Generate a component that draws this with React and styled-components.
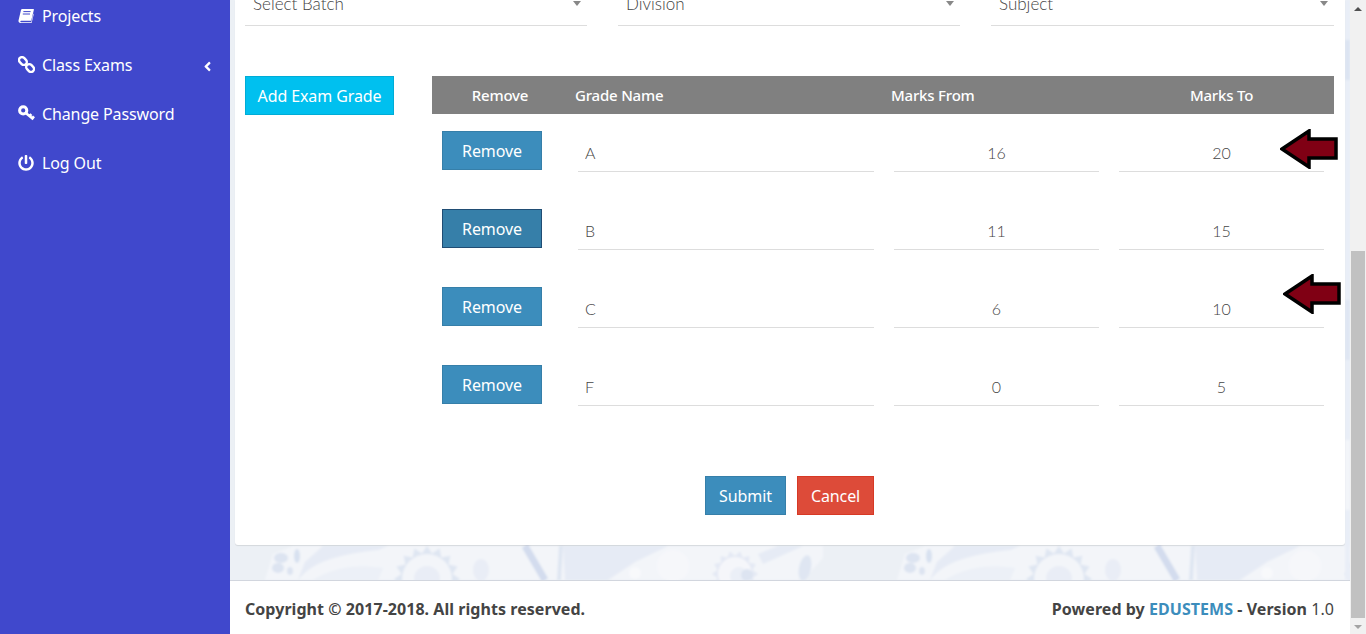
import React from 'react'
import styled, { createGlobalStyle } from 'styled-components'
import { FaPowerOff, FaAngleLeft } from 'react-icons/fa'

const grades = [
    { name: 'A', from: '16', to: '20' },
    { name: 'B', from: '11', to: '15', active: true },
    { name: 'C', from: '6', to: '10' },
    { name: 'F', from: '0', to: '5' },
]

function gearPoints(cx, cy, inner, outer, teeth) {
    const pts = []
    for (let i = 0; i < teeth * 2; i++) {
        const r = i % 2 ? inner : outer
        const a = (Math.PI * i) / teeth
        pts.push(`${(cx + r * Math.cos(a)).toFixed(1)},${(cy + r * Math.sin(a)).toFixed(1)}`)
    }
    return pts.join(' ')
}

function Floral() {
    return (
        <Backdrop>
            <defs>
                <filter id="soft">
                    <feGaussianBlur stdDeviation="1" />
                </filter>
                <g id="tile">
                    <path d="M2 34 L10 8 L30 0 L560 0 L560 12 L540 34 Z" fill="#f3f5f9" />
                    <ellipse cx="18" cy="12" rx="7" ry="5" fill="#dde4f1" />
                    <ellipse cx="15" cy="22" rx="6" ry="5" fill="#dde4f1" />
                    <ellipse cx="34" cy="10" rx="3" ry="7" fill="#d8e1f0" />
                    <ellipse cx="27" cy="25" rx="3" ry="4" fill="#dde4f1" />
                    <path d="M35 34 C50 14 80 8 115 4 L125 0 L60 0 L42 16 Z" fill="#e6ebf5" />
                    <path d="M50 34 C70 22 90 18 120 22 L115 34 Z" fill="#ecf0f7" />
                    <polygon points={gearPoints(164, 33, 26, 33, 16)} fill="#dfe6f2" />
                    <circle cx="164" cy="33" r="25" fill="#f3f5f9" />
                    <circle cx="164" cy="33" r="13" fill="#e9edf6" />
                    <ellipse cx="218" cy="24" rx="8" ry="11" fill="#e9edf6" />
                    <path d="M262 0 L282 34" stroke="#d3dcee" strokeWidth="7" />
                    <path d="M298 0 L296 34" stroke="#dfe6f2" strokeWidth="4" />
                    <path d="M300 0 L405 0 L372 16 L345 34 L302 34 Z" fill="#e6ebf5" />
                    <circle cx="372" cy="27" r="6" fill="#f8f9fb" />
                    <circle cx="410" cy="20" r="16" fill="#f6f7fa" />
                    <polygon points={gearPoints(472, 28, 18, 23, 14)} fill="#e4e9f4" />
                    <circle cx="472" cy="28" r="17" fill="#f5f6fa" />
                    <circle cx="476" cy="30" r="9" fill="#ebeff7" />
                    <circle cx="484" cy="29" r="6" fill="#dde4f1" />
                    <path d="M500 18 L540 0 L515 0 L495 8 Z" fill="#e6ebf5" />
                    <ellipse cx="542" cy="22" rx="6" ry="13" transform="rotate(12 542 22)" fill="#dfe6f2" />
                </g>
            </defs>
            <g filter="url(#soft)" transform="translate(0 546)">
                <use href="#tile" x="33" />
                <use href="#tile" x="665" />
            </g>
            <g filter="url(#soft)">
                <rect x="1115" y="0" width="5" height="580" fill="#e9eef7" />
                <rect x="1115" y="40" width="5" height="40" fill="#dce4f2" />
                <rect x="1115" y="300" width="5" height="60" fill="#dfe6f3" />
                <rect x="1115" y="440" width="5" height="70" fill="#f3f5f9" />
            </g>
        </Backdrop>
    )
}

function Arrow({ top, left }) {
    return (
        <ArrowMark $top={top} $left={left} width="58" height="40" viewBox="0 0 58 40">
            <polygon
                points="2,20 29,2 29,10 56,10 56,29 29,29 29,38"
                fill="#800014"
                stroke="#000"
                strokeWidth="3.5"
            />
        </ArrowMark>
    )
}

function BookIcon() {
    return (
        <svg width="16" height="16" viewBox="0 0 16 16" fill="#fff">
            <path d="M4.2 1 H15.4 C15.8 1 16 1.4 15.9 1.8 L13.3 12.2 C13.2 12.6 12.9 12.8 12.5 12.8 H3.2 C2.6 12.8 2.3 13.1 2.3 13.4 C2.3 13.9 2.6 14.2 3.2 14.2 H13.2 L15.4 5.6 L15.8 6 L13.6 15 H2.6 C1.2 15 0.3 13.8 0.5 12.6 L3 2 C3.2 1.4 3.6 1 4.2 1 Z" />
            <path d="M5.4 3.6 H12.6 M4.8 6 H12" stroke="#4048cc" strokeWidth="1" />
        </svg>
    )
}

function ChainIcon() {
    return (
        <svg width="17" height="17" viewBox="0 0 17 17" fill="none" stroke="#fff" strokeWidth="2.4">
            <rect x="0.6" y="2" width="8.6" height="6" rx="3" transform="rotate(45 4.9 5)" />
            <rect x="7.8" y="9" width="8.6" height="6" rx="3" transform="rotate(45 12.1 12)" />
        </svg>
    )
}

function KeyIcon() {
    return (
        <svg width="17" height="17" viewBox="0 0 17 17" fill="none" stroke="#fff">
            <circle cx="5.2" cy="5.4" r="3.6" strokeWidth="3" />
            <path d="M7.8 8 L15.4 14.2 M11.6 11 L13.4 9.2 M14.2 13.4 L16 11.4" strokeWidth="2.6" />
        </svg>
    )
}

function App() {
    const menu = [
        { label: 'Projects', icon: <BookIcon /> },
        { label: 'Class Exams', icon: <ChainIcon />, more: true },
        { label: 'Change Password', icon: <KeyIcon /> },
        { label: 'Log Out', icon: <FaPowerOff /> },
    ]

    return (
        <Page>
            <GlobalStyle />
            <Sidebar>
                {menu.map((item) => (
                    <MenuItem key={item.label}>
                        <MenuIcon>{item.icon}</MenuIcon>
                        {item.label}
                        {item.more && <MenuCaret><FaAngleLeft /></MenuCaret>}
                    </MenuItem>
                ))}
            </Sidebar>
            <Main>
                <Floral />
                <Card>
                    <Filters>
                        <SelectField>Select Batch</SelectField>
                        <SelectField>Division</SelectField>
                        <SelectField>Subject</SelectField>
                    </Filters>
                    <FormArea>
                        <AddColumn>
                            <Button $kind="info" $width={149}>Add Exam Grade</Button>
                        </AddColumn>
                        <Table>
                            <HeadRow>
                                <HeadCell $center>Remove</HeadCell>
                                <HeadCell>Grade Name</HeadCell>
                                <HeadCell>Marks From</HeadCell>
                                <HeadCell $center>Marks To</HeadCell>
                            </HeadRow>
                            {grades.map((g) => (
                                <GradeRow key={g.name}>
                                    <RemoveCell>
                                        <Button $kind={g.active ? 'pressed' : 'primary'} $width={100}>Remove</Button>
                                    </RemoveCell>
                                    <FieldCell><FieldInput readOnly value={g.name} /></FieldCell>
                                    <FieldCell><FieldInput readOnly $center value={g.from} /></FieldCell>
                                    <FieldCell><FieldInput readOnly $center value={g.to} /></FieldCell>
                                </GradeRow>
                            ))}
                            <Arrow top={53} left={848} />
                            <Arrow top={198} left={851} />
                        </Table>
                    </FormArea>
                    <Actions>
                        <Button $kind="primary" $width={81}>Submit</Button>
                        <Button $kind="danger" $width={77}>Cancel</Button>
                    </Actions>
                </Card>
                <Footer>
                    <span>Copyright © 2017-2018. All rights reserved.</span>
                    <span>
                        Powered by <FooterLink>EDUSTEMS</FooterLink> - Version <Version>1.0</Version>
                    </span>
                </Footer>
            </Main>
            <Scrollbar>
                <ScrollArrow $up />
                <ScrollTrack><ScrollThumb /></ScrollTrack>
                <ScrollArrow />
            </Scrollbar>
        </Page>
    )
}

const GlobalStyle = createGlobalStyle`
    html, body {
        margin: 0;
        height: 100%;
        overflow: hidden;
    }
    body {
        font-family: "Noto Sans", "Open Sans", sans-serif;
        color: #444;
    }
`

const Page = styled.div`
    display: flex;
    width: 1366px;
    height: 634px;
    overflow: hidden;
`

const Sidebar = styled.nav`
    flex: 0 0 230px;
    background: #4048cc;
    overflow: hidden;
`

const MenuItem = styled.div`
    display: flex;
    align-items: center;
    height: 49px;
    padding-left: 18px;
    color: #fff;
    font-size: 16px;
    letter-spacing: -0.12px;
    &:first-child {
        margin-top: -9px;
    }
`

const MenuIcon = styled.span`
    display: flex;
    width: 24px;
    font-size: 16px;
`

const MenuCaret = styled.span`
    display: flex;
    margin-left: auto;
    margin-right: 15px;
    font-size: 15px;
    padding-top: 4px;
`

const Main = styled.main`
    flex: 0 0 1120px;
    position: relative;
    display: flex;
    flex-direction: column;
    background: #ecf0f5;
`

const Backdrop = styled.svg`
    position: absolute;
    inset: 0;
    width: 1120px;
    height: 634px;
`

const Card = styled.section`
    position: relative;
    margin: 0 5px;
    height: 545px;
    box-sizing: border-box;
    padding: 0 11px 0 10px;
    background: #fff;
    border-radius: 0 0 3px 3px;
    box-shadow: 0 1px 1px rgba(0, 0, 0, 0.1);
`

const Filters = styled.div`
    display: grid;
    grid-template-columns: 342px 342px 343px;
    gap: 31px;
    margin-top: -8px;
`

const SelectField = styled.div`
    position: relative;
    height: 34px;
    box-sizing: border-box;
    padding: 1px 8px 0;
    border-bottom: 1px solid #ddd;
    font-family: Lato, "Noto Sans", sans-serif;
    font-size: 17px;
    font-weight: 300;
    line-height: 22px;
    color: #444;
    &::after {
        content: '';
        position: absolute;
        right: 6px;
        top: 9px;
        border: 4px solid transparent;
        border-top: 5px solid #888;
        border-bottom: 0;
    }
`

const FormArea = styled.div`
    display: flex;
    margin-top: 50px;
`

const AddColumn = styled.div`
    flex: 0 0 187px;
`

const Table = styled.div`
    position: relative;
    flex: 0 0 902px;
`

const columns = '136px 316px 225px 225px'

const HeadRow = styled.div`
    display: grid;
    grid-template-columns: ${columns};
    height: 38px;
    align-items: center;
    background: #808080;
    color: #fff;
    font-size: 15px;
    font-weight: 500;
    letter-spacing: -0.2px;
`

const HeadCell = styled.div`
    text-align: ${(p) => (p.$center ? 'center' : 'left')};
    padding-left: ${(p) => (p.$center ? '0' : '7px')};
`

const GradeRow = styled.div`
    display: grid;
    grid-template-columns: ${columns};
    height: 61px;
    padding-top: 17px;
`

const RemoveCell = styled.div`
    padding-left: 10px;
`

const FieldCell = styled.div`
    padding: 0 10px;
`

const FieldInput = styled.input`
    display: block;
    width: 100%;
    height: 41px;
    box-sizing: border-box;
    padding: 2px 7px 0;
    border: 0;
    border-bottom: 1px solid #ddd;
    outline: 0;
    background: transparent;
    font-family: Lato, "Noto Sans", sans-serif;
    font-size: 16px;
    font-weight: 300;
    color: #444;
    text-align: ${(p) => (p.$center ? 'center' : 'left')};
`

const buttonKinds = {
    primary: ['#3c8dbc', '#367fa9'],
    pressed: ['#367fa9', '#204d74'],
    info: ['#00c0ef', '#00acd6'],
    danger: ['#dd4b39', '#d73925'],
}

const Button = styled.button`
    height: 39px;
    width: ${(p) => p.$width}px;
    padding: 0;
    box-sizing: border-box;
    border: 1px solid ${(p) => buttonKinds[p.$kind][1]};
    background: ${(p) => buttonKinds[p.$kind][0]};
    color: #fff;
    font-family: inherit;
    font-size: 16px;
    letter-spacing: -0.1px;
`

const ArrowMark = styled.svg`
    position: absolute;
    top: ${(p) => p.$top}px;
    left: ${(p) => p.$left}px;
`

const Actions = styled.div`
    display: flex;
    justify-content: center;
    gap: 11px;
    margin-top: 50px;
`

const Footer = styled.footer`
    position: absolute;
    left: 0;
    right: 0;
    bottom: 0;
    height: 54px;
    box-sizing: border-box;
    padding: 2px 16px 0 15px;
    display: flex;
    align-items: center;
    justify-content: space-between;
    background: #fff;
    border-top: 1px solid #d2d6de;
    color: #444;
    font-size: 16px;
    font-weight: 700;
    letter-spacing: 0.05px;
`

const FooterLink = styled.span`
    color: #3c8dbc;
`

const Version = styled.span`
    font-weight: 400;
`

const Scrollbar = styled.div`
    flex: 0 0 16px;
    display: flex;
    flex-direction: column;
    background: #f1f1f1;
`

const ScrollArrow = styled.div`
    flex: 0 0 17px;
    display: flex;
    align-items: center;
    justify-content: center;
    &::before {
        content: '';
        border: 4px solid transparent;
        border-top: ${(p) => (p.$up ? '0' : '4px solid #a3a3a3')};
        border-bottom: ${(p) => (p.$up ? '4px solid #505050' : '0')};
    }
`

const ScrollTrack = styled.div`
    flex: 1;
    padding: 234px 1px 0;
`

const ScrollThumb = styled.div`
    height: 367px;
    background: #c1c1c1;
`

export default App
